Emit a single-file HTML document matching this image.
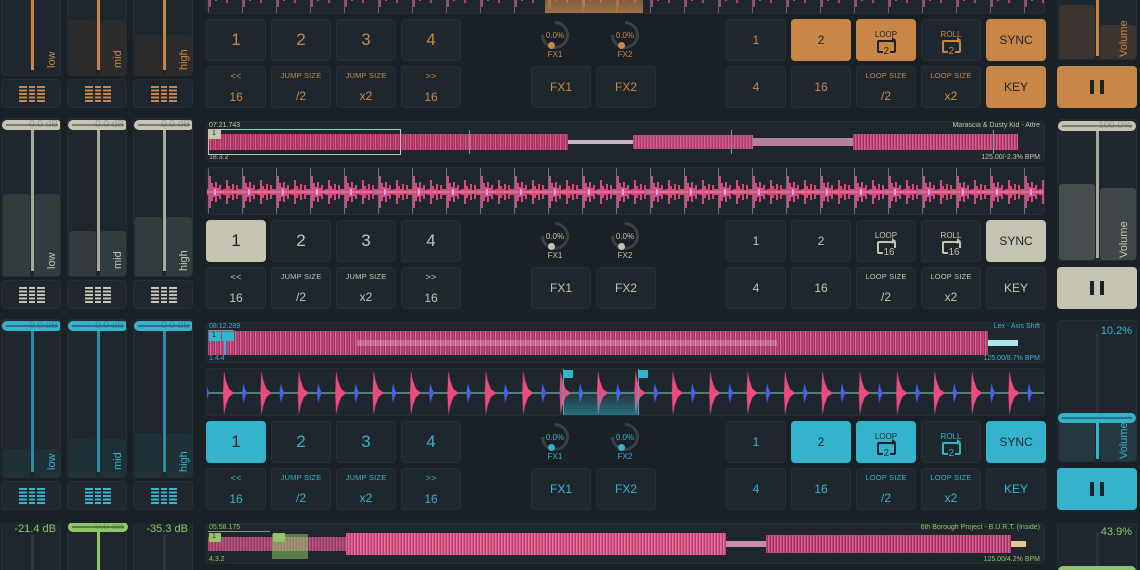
<!DOCTYPE html>
<html><head><meta charset="utf-8"><style>
*{margin:0;padding:0;box-sizing:border-box}
html,body{width:1140px;height:570px;overflow:hidden}
body{background:#1a2126;font-family:"Liberation Sans",sans-serif}
#w{position:relative;width:1140px;height:570px;overflow:hidden}
.deck{position:absolute;left:0;width:1140px;height:201px}
.p{position:absolute;background:#1e272d;border:1px solid #242e34;border-radius:4px}
.btn{position:absolute;width:60px;height:42px;background:#1e272d;border:1px solid #252f35;border-radius:4px;color:var(--c);text-align:center;display:flex;flex-direction:column;justify-content:center;align-items:center}
.btn.on{background:var(--c);color:#1c2328;border-color:var(--c)}
.big{font-size:17px}
.med{font-size:12px}
.sm{font-size:7.5px;letter-spacing:.2px;margin-bottom:9px}
.r1{top:99px}.r2{top:146px}
.d1{--c:#c98747;--line:#c98747;--bar:#2b2c2b}
.d2{--c:#c5c4b2;--line:#a9a99b;--bar:#323b3e}
.d3{--c:#35b3cc;--line:#2a8ea3;--bar:#1f3036}
.d4{--c:#92c46a;--line:#2e3a33;--bar:#222c30}
.eqp{position:absolute;top:-3px;width:60px;height:159px;overflow:hidden}
.bar{position:absolute;background:var(--bar);border-radius:3px 3px 0 0}
.vline{position:absolute;width:3px;background:var(--line)}
.cap{position:absolute;height:10px;background:var(--c);border-radius:5px;font-size:10px;color:rgba(30,38,44,.25);text-align:right;padding-right:4px;line-height:10px}
.cap:before{content:"";position:absolute;left:4px;right:4px;top:4px;height:2px;background:rgba(30,38,44,.45)}
.lbl{position:absolute;color:var(--c);font-size:11px;transform:rotate(-90deg);transform-origin:left top}
.eqb{position:absolute;top:159px;width:60px;height:29px}
.ico{position:absolute;left:17px;top:6px;width:26px;height:17px;background:repeating-linear-gradient(180deg,var(--c) 0 2px,transparent 2px 3.5px)}
.ico i{position:absolute;top:0;bottom:0;width:2px;background:#1e272d}
.ov{position:absolute;left:206px;top:0;width:839px;height:41px;overflow:hidden}
.sc{position:absolute;left:206px;top:46px;width:839px;height:48px;overflow:hidden}
.t7{position:absolute;font-size:7px;color:var(--c)}
.band{position:absolute;height:22px;top:9px}
.knob{position:absolute;top:101px;width:28px;height:28px;border-radius:50%;border:3px solid #3a4146;border-left-color:transparent;transform:rotate(45deg)}
.kt{position:absolute;font-size:8px;color:var(--c);text-align:center;width:40px}
.dot{position:absolute;width:7px;height:7px;border-radius:50%;background:var(--c)}
.vol{position:absolute;left:1057px;top:-2px;width:80px;height:142px;overflow:hidden}
.play{position:absolute;left:1057px;top:146px;width:80px;height:42px;border-radius:4px;background:var(--c)}
.play:before,.play:after{content:"";position:absolute;top:14px;width:4px;height:14px;background:#1c2328}
.play:before{left:33px}.play:after{left:43px}
.loop{position:relative;width:19px;height:13px;border:2px solid currentColor;border-radius:2px;margin-top:1px;margin-bottom:-3px}
.loop:before{content:"";position:absolute;right:-5px;top:-5px;border:3px solid transparent;border-left:4px solid currentColor}
.loop b{position:absolute;left:4px;top:5px;font-size:10px;font-weight:normal;line-height:10px;background:inherit;padding:0 1px}
.bl{font-size:8px;line-height:8px}
</style></head><body><div id="w">

<svg width="0" height="0" style="position:absolute">
<defs>
<pattern id="wp" width="34" height="48" patternUnits="userSpaceOnUse" x="1">
<rect x="0" y="0" width="1" height="48" fill="#6b7378"/>
<g fill="#ea4c86" opacity=".9">
<rect x="1" y="8" width="2" height="32"/><rect x="3" y="15" width="2" height="18"/><rect x="5" y="19" width="2" height="10"/><rect x="7" y="14" width="2" height="20"/><rect x="9" y="20" width="2" height="8"/><rect x="11" y="17" width="2" height="14"/><rect x="13" y="22" width="2" height="4"/><rect x="15" y="21" width="3" height="6"/><rect x="18" y="12" width="2" height="24"/><rect x="20" y="18" width="2" height="12"/><rect x="22" y="21" width="2" height="6"/><rect x="24" y="16" width="2" height="16"/><rect x="26" y="22" width="2" height="4"/><rect x="28" y="17" width="2" height="14"/><rect x="30" y="21" width="4" height="6"/>
</g>
<rect x="0" y="23.5" width="34" height="1" fill="#f28ab0"/>
<rect x="6" y="21" width="2" height="6" fill="#c9a6ff"/>
</pattern>
<pattern id="wc" width="37.4" height="48" patternUnits="userSpaceOnUse" x="16">
<rect x="0" y="23.5" width="37.4" height="1" fill="#8fd3c0"/>
<path d="M0 24 L1 2 L3 12 L6 20 L10 23 L10 25 L6 28 L3 36 L1 46 Z" fill="#ec4a80"/>
<path d="M19 24 L20.5 14 L22 20 L24 24 L22 28 L20.5 34 Z" fill="#4b5ef0"/>
</pattern>
</defs>
</svg>

<!-- ========== DECK 1 ========== -->
<div class="deck d1" style="top:-80px">
  <div class="p sc" style="border-color:#252f35">
    <svg width="839" height="48" style="position:absolute;left:0;top:0"><rect width="839" height="48" fill="url(#wp)" opacity=".8"/></svg>
    <div style="position:absolute;left:338px;top:0;width:98px;height:48px;background:linear-gradient(180deg,rgba(201,135,71,.15),rgba(201,135,71,.75));border-bottom:2px solid #c98747"></div>
  </div>
  <div class="p eqp" style="left:1px"><div class="vline" style="left:29px;top:0;height:152px"></div><div class="lbl" style="left:44px;top:150px">low</div></div>
  <div class="p eqp" style="left:67px"><div class="bar" style="left:1px;width:27px;top:102px;bottom:0"></div><div class="bar" style="left:32px;width:26px;top:102px;bottom:0"></div><div class="vline" style="left:29px;top:0;height:152px"></div><div class="lbl" style="left:44px;top:150px">mid</div></div>
  <div class="p eqp" style="left:133px"><div class="bar" style="left:1px;width:27px;top:117px;bottom:0"></div><div class="bar" style="left:32px;width:26px;top:117px;bottom:0"></div><div class="vline" style="left:29px;top:0;height:152px"></div><div class="lbl" style="left:44px;top:152px">high</div></div>
  <div class="p eqb" style="left:1px"><div class="ico"><i style="left:8px"></i><i style="left:16px"></i></div></div>
  <div class="p eqb" style="left:67px"><div class="ico"><i style="left:8px"></i><i style="left:16px"></i></div></div>
  <div class="p eqb" style="left:133px"><div class="ico"><i style="left:8px"></i><i style="left:16px"></i></div></div>
  <div class="p vol"><div class="bar" style="background:#3b342f;left:1px;width:36px;top:86px;bottom:0;border-radius:3px"></div><div class="bar" style="background:#3b342f;left:42px;width:36px;top:106px;bottom:0;border-radius:3px"></div><div class="vline" style="left:38px;top:0;height:137px"></div><div class="lbl" style="left:60px;top:138px">Volume</div></div>
  <div class="play"></div>
  <div class="btn r1 big" style="left:206px">1</div><div class="btn r1 big" style="left:271px">2</div><div class="btn r1 big" style="left:336px">3</div><div class="btn r1 big" style="left:401px">4</div>
  <div class="btn r2" style="left:206px"><div class="sm" style="font-size:9px">&lt;&lt;</div><div class="med">16</div></div>
  <div class="btn r2" style="left:271px"><div class="sm">JUMP SIZE</div><div class="med">/2</div></div>
  <div class="btn r2" style="left:336px"><div class="sm">JUMP SIZE</div><div class="med">x2</div></div>
  <div class="btn r2" style="left:401px"><div class="sm" style="font-size:9px">&gt;&gt;</div><div class="med">16</div></div>
  <div class="knob" style="left:541px"></div><div class="dot" style="left:548px;top:122px"></div><div class="kt" style="left:535px;top:111px">0.0%</div><div class="kt" style="left:535px;top:130px">FX1</div>
  <div class="knob" style="left:611px"></div><div class="dot" style="left:618px;top:122px"></div><div class="kt" style="left:605px;top:111px">0.0%</div><div class="kt" style="left:605px;top:130px">FX2</div>
  <div class="btn r2 med" style="left:531px">FX1</div><div class="btn r2 med" style="left:596px">FX2</div>
  <div class="btn r1 med" style="left:726px">1</div><div class="btn r1 on med" style="left:791px">2</div>
  <div class="btn r1 on" style="left:856px"><div class="bl">LOOP</div><div class="loop" style="background:var(--c)"><b>2</b></div></div>
  <div class="btn r1" style="left:921px"><div class="bl">ROLL</div><div class="loop" style="background:#1e272d"><b>2</b></div></div>
  <div class="btn r1 on med" style="left:986px">SYNC</div>
  <div class="btn r2 med" style="left:726px">4</div><div class="btn r2 med" style="left:791px">16</div>
  <div class="btn r2" style="left:856px"><div class="sm">LOOP SIZE</div><div class="med">/2</div></div>
  <div class="btn r2" style="left:921px"><div class="sm">LOOP SIZE</div><div class="med">x2</div></div>
  <div class="btn r2 on med" style="left:986px">KEY</div>
</div>

<!-- ========== DECK 2 ========== -->
<div class="deck d2" style="top:121px">
  <div class="p ov">
    <div class="t7" style="left:2px;top:0">07:21.743</div>
    <div class="t7" style="right:4px;top:0">Marascia &amp; Dusty Kid - Attre</div>
    <div class="t7" style="left:2px;top:32px">18.3.2</div>
    <div class="t7" style="right:4px;top:32px">125.00/-2.3% BPM</div>
    <div class="band" style="left:1px;width:360px;background:repeating-linear-gradient(90deg,#e94a84 0 1px,#a9386a 1px 2px,#f26b9c 2px 3px,#c9386c 3px 5px);opacity:.85;top:12px;height:16px"></div>
    <div class="band" style="left:361px;width:65px;top:18px;height:4px;background:#c9b3c8"></div>
    <div class="band" style="left:426px;width:120px;top:13px;height:14px;background:repeating-linear-gradient(90deg,#e94a84 0 1px,#b1477a 1px 2px,#f06a9c 2px 3px);opacity:.85"></div>
    <div class="band" style="left:546px;width:100px;top:16px;height:8px;background:#d89ab8;opacity:.8"></div>
    <div class="band" style="left:646px;width:165px;top:12px;height:16px;background:repeating-linear-gradient(90deg,#e94a84 0 1px,#a9386a 1px 2px,#f26b9c 2px 3px);opacity:.85"></div>
    <div style="position:absolute;left:1px;top:7px;width:193px;height:26px;border:1px solid #c5c4b2"></div>
    <div style="position:absolute;left:2px;top:8px;width:12px;height:9px;background:#c5c4b2;font-size:7px;color:#1c2328;padding-left:3px">1</div>
    <div style="position:absolute;left:262px;top:8px;width:1px;height:24px;background:#8a9094"></div>
    <div style="position:absolute;left:524px;top:8px;width:1px;height:24px;background:#8a9094"></div>
    <div style="position:absolute;left:786px;top:8px;width:1px;height:24px;background:#8a9094"></div>
  </div>
  <div class="p sc"><svg width="839" height="48" style="position:absolute;left:0;top:0"><rect width="839" height="48" fill="url(#wp)"/></svg></div>
  <div class="p eqp" style="left:1px"><div class="bar" style="left:1px;width:27px;top:75px;bottom:0"></div><div class="bar" style="left:32px;width:26px;top:75px;bottom:0"></div><div class="vline" style="left:29px;top:8px;height:144px"></div><div class="cap" style="left:0;top:1px;width:60px">0.0 dB</div><div class="lbl" style="left:44px;top:150px">low</div></div>
  <div class="p eqp" style="left:67px"><div class="bar" style="left:1px;width:27px;top:112px;bottom:0"></div><div class="bar" style="left:32px;width:26px;top:112px;bottom:0"></div><div class="vline" style="left:29px;top:8px;height:144px"></div><div class="cap" style="left:0;top:1px;width:60px">0.0 dB</div><div class="lbl" style="left:44px;top:150px">mid</div></div>
  <div class="p eqp" style="left:133px"><div class="bar" style="left:1px;width:27px;top:98px;bottom:0"></div><div class="bar" style="left:32px;width:26px;top:98px;bottom:0"></div><div class="vline" style="left:29px;top:8px;height:144px"></div><div class="cap" style="left:0;top:1px;width:60px">0.0 dB</div><div class="lbl" style="left:44px;top:152px">high</div></div>
  <div class="p eqb" style="left:1px"><div class="ico"><i style="left:8px"></i><i style="left:16px"></i></div></div>
  <div class="p eqb" style="left:67px"><div class="ico"><i style="left:8px"></i><i style="left:16px"></i></div></div>
  <div class="p eqb" style="left:133px"><div class="ico"><i style="left:8px"></i><i style="left:16px"></i></div></div>
  <div class="p vol"><div class="bar" style="background:#454d4e;left:1px;width:36px;top:64px;bottom:0;border-radius:3px"></div><div class="bar" style="background:#3f4748;left:42px;width:36px;top:68px;bottom:0;border-radius:3px"></div><div class="vline" style="left:38px;top:8px;height:130px"></div><div class="cap" style="left:0;top:1px;width:78px">100.0%</div><div class="lbl" style="left:60px;top:138px">Volume</div></div>
  <div class="play"></div>
  <div class="btn r1 big on" style="left:206px">1</div><div class="btn r1 big" style="left:271px">2</div><div class="btn r1 big" style="left:336px">3</div><div class="btn r1 big" style="left:401px">4</div>
  <div class="btn r2" style="left:206px"><div class="sm" style="font-size:9px">&lt;&lt;</div><div class="med">16</div></div>
  <div class="btn r2" style="left:271px"><div class="sm">JUMP SIZE</div><div class="med">/2</div></div>
  <div class="btn r2" style="left:336px"><div class="sm">JUMP SIZE</div><div class="med">x2</div></div>
  <div class="btn r2" style="left:401px"><div class="sm" style="font-size:9px">&gt;&gt;</div><div class="med">16</div></div>
  <div class="knob" style="left:541px"></div><div class="dot" style="left:548px;top:122px"></div><div class="kt" style="left:535px;top:111px">0.0%</div><div class="kt" style="left:535px;top:130px">FX1</div>
  <div class="knob" style="left:611px"></div><div class="dot" style="left:618px;top:122px"></div><div class="kt" style="left:605px;top:111px">0.0%</div><div class="kt" style="left:605px;top:130px">FX2</div>
  <div class="btn r2 med" style="left:531px">FX1</div><div class="btn r2 med" style="left:596px">FX2</div>
  <div class="btn r1 med" style="left:726px">1</div><div class="btn r1 med" style="left:791px">2</div>
  <div class="btn r1" style="left:856px"><div class="bl">LOOP</div><div class="loop" style="background:#1e272d"><b>16</b></div></div>
  <div class="btn r1" style="left:921px"><div class="bl">ROLL</div><div class="loop" style="background:#1e272d"><b>16</b></div></div>
  <div class="btn r1 on med" style="left:986px">SYNC</div>
  <div class="btn r2 med" style="left:726px">4</div><div class="btn r2 med" style="left:791px">16</div>
  <div class="btn r2" style="left:856px"><div class="sm">LOOP SIZE</div><div class="med">/2</div></div>
  <div class="btn r2" style="left:921px"><div class="sm">LOOP SIZE</div><div class="med">x2</div></div>
  <div class="btn r2 med" style="left:986px">KEY</div>
</div>

<!-- ========== DECK 3 ========== -->
<div class="deck d3" style="top:322px">
  <div class="p ov">
    <div class="t7" style="left:2px;top:0">08:12.289</div>
    <div class="t7" style="right:4px;top:0">Lex - Axis Shift</div>
    <div class="t7" style="left:2px;top:32px">1.4.4</div>
    <div class="t7" style="right:4px;top:32px">125.00/8.7% BPM</div>
    <div class="band" style="left:1px;width:780px;top:8px;height:24px;background:repeating-linear-gradient(90deg,#e94a84 0 1px,#a93468 1px 2px,#f27aa6 2px 3px,#c8437a 3px 5px);opacity:.85"></div>
    <div class="band" style="left:150px;width:420px;top:17px;height:6px;background:rgba(240,190,220,.35)"></div>
    <div class="band" style="left:781px;width:30px;top:17px;height:6px;background:#a9e6ee"></div>
    <div style="position:absolute;left:1px;top:7px;width:26px;height:1px;background:#8a9094"></div>
    <div style="position:absolute;left:2px;top:9px;width:12px;height:9px;background:#35b3cc;font-size:7px;color:#1c2328;padding-left:3px">1</div>
    <div style="position:absolute;left:15px;top:9px;width:12px;height:9px;background:#35b3cc"></div>
    <div style="position:absolute;left:17px;top:18px;width:2px;height:14px;background:#35b3cc"></div>
  </div>
  <div class="p sc">
    <svg width="839" height="48" style="position:absolute;left:0;top:0"><rect width="839" height="48" fill="url(#wc)"/></svg>
    <div style="position:absolute;left:356px;top:0;width:76px;height:48px;background:linear-gradient(180deg,transparent 40%,rgba(53,179,204,.55));border-left:1px solid #35b3cc;border-right:1px solid #35b3cc"></div>
    <div style="position:absolute;left:356px;top:1px;width:10px;height:8px;background:#35b3cc"></div>
    <div style="position:absolute;left:431px;top:1px;width:10px;height:8px;background:#35b3cc"></div>
  </div>
  <div class="p eqp" style="left:1px"><div class="bar" style="left:1px;width:27px;top:129px;bottom:0"></div><div class="bar" style="left:32px;width:26px;top:129px;bottom:0"></div><div class="vline" style="left:29px;top:8px;height:144px"></div><div class="cap" style="left:0;top:1px;width:60px">0.0 dB</div><div class="lbl" style="left:44px;top:150px">low</div></div>
  <div class="p eqp" style="left:67px"><div class="bar" style="left:1px;width:27px;top:119px;bottom:0"></div><div class="bar" style="left:32px;width:26px;top:119px;bottom:0"></div><div class="vline" style="left:29px;top:8px;height:144px"></div><div class="cap" style="left:0;top:1px;width:60px">0.0 dB</div><div class="lbl" style="left:44px;top:150px">mid</div></div>
  <div class="p eqp" style="left:133px"><div class="bar" style="left:1px;width:27px;top:113px;bottom:0"></div><div class="bar" style="left:32px;width:26px;top:113px;bottom:0"></div><div class="vline" style="left:29px;top:8px;height:144px"></div><div class="cap" style="left:0;top:1px;width:60px">0.0 dB</div><div class="lbl" style="left:44px;top:152px">high</div></div>
  <div class="p eqb" style="left:1px"><div class="ico"><i style="left:8px"></i><i style="left:16px"></i></div></div>
  <div class="p eqb" style="left:67px"><div class="ico"><i style="left:8px"></i><i style="left:16px"></i></div></div>
  <div class="p eqb" style="left:133px"><div class="ico"><i style="left:8px"></i><i style="left:16px"></i></div></div>
  <div class="p vol"><div class="vline" style="left:38px;top:12px;height:90px;background:#2a3338"></div><div class="bar" style="background:#24383f;left:1px;width:36px;top:100px;bottom:0;border-radius:3px"></div><div class="bar" style="background:#24383f;left:42px;width:36px;top:100px;bottom:0;border-radius:3px"></div><div class="vline" style="left:38px;top:95px;height:43px;background:#35b3cc"></div><div class="cap" style="left:0;top:92px;width:78px;color:transparent"></div><div style="position:absolute;right:4px;top:4px;font-size:11px;color:#35b3cc">10.2%</div><div class="lbl" style="left:60px;top:138px">Volume</div></div>
  <div class="play"></div>
  <div class="btn r1 big on" style="left:206px">1</div><div class="btn r1 big" style="left:271px">2</div><div class="btn r1 big" style="left:336px">3</div><div class="btn r1 big" style="left:401px">4</div>
  <div class="btn r2" style="left:206px"><div class="sm" style="font-size:9px">&lt;&lt;</div><div class="med">16</div></div>
  <div class="btn r2" style="left:271px"><div class="sm">JUMP SIZE</div><div class="med">/2</div></div>
  <div class="btn r2" style="left:336px"><div class="sm">JUMP SIZE</div><div class="med">x2</div></div>
  <div class="btn r2" style="left:401px"><div class="sm" style="font-size:9px">&gt;&gt;</div><div class="med">16</div></div>
  <div class="knob" style="left:541px"></div><div class="dot" style="left:548px;top:122px"></div><div class="kt" style="left:535px;top:111px">0.0%</div><div class="kt" style="left:535px;top:130px">FX1</div>
  <div class="knob" style="left:611px"></div><div class="dot" style="left:618px;top:122px"></div><div class="kt" style="left:605px;top:111px">0.0%</div><div class="kt" style="left:605px;top:130px">FX2</div>
  <div class="btn r2 med" style="left:531px">FX1</div><div class="btn r2 med" style="left:596px">FX2</div>
  <div class="btn r1 med" style="left:726px">1</div><div class="btn r1 on med" style="left:791px">2</div>
  <div class="btn r1 on" style="left:856px"><div class="bl">LOOP</div><div class="loop" style="background:var(--c)"><b>2</b></div></div>
  <div class="btn r1" style="left:921px"><div class="bl">ROLL</div><div class="loop" style="background:#1e272d"><b>2</b></div></div>
  <div class="btn r1 on med" style="left:986px">SYNC</div>
  <div class="btn r2 med" style="left:726px">4</div><div class="btn r2 med" style="left:791px">16</div>
  <div class="btn r2" style="left:856px"><div class="sm">LOOP SIZE</div><div class="med">/2</div></div>
  <div class="btn r2" style="left:921px"><div class="sm">LOOP SIZE</div><div class="med">x2</div></div>
  <div class="btn r2 med" style="left:986px">KEY</div>
</div>

<!-- ========== DECK 4 ========== -->
<div class="deck d4" style="top:523px;height:47px;overflow:hidden">
  <div class="p ov">
    <div class="t7" style="left:2px;top:0">05:58.175</div>
    <div class="t7" style="right:4px;top:0">6th Borough Project - B.U.R.T. (Inside)</div>
    <div class="t7" style="left:2px;top:32px">4.3.2</div>
    <div class="t7" style="right:4px;top:32px">125.00/4.2% BPM</div>
    <div class="band" style="left:1px;width:138px;top:13px;height:14px;background:repeating-linear-gradient(90deg,#e94a84 0 1px,#9c4a78 1px 2px,#f06a9c 2px 3px);opacity:.75"></div>
    <div class="band" style="left:139px;width:380px;top:9px;height:22px;background:repeating-linear-gradient(90deg,#ef5a92 0 1px,#c8437a 1px 2px,#f27aa6 2px 3px);opacity:.9"></div>
    <div class="band" style="left:519px;width:40px;top:17px;height:6px;background:#c88aa8"></div>
    <div class="band" style="left:559px;width:245px;top:11px;height:18px;background:repeating-linear-gradient(90deg,#e94a84 0 1px,#a9386a 1px 2px,#f26b9c 2px 3px);opacity:.85"></div>
    <div class="band" style="left:804px;width:15px;top:17px;height:6px;background:#e0c890"></div>
    <div style="position:absolute;left:65px;top:10px;width:36px;height:25px;background:rgba(146,196,106,.55)"></div>
    <div style="position:absolute;left:1px;top:7px;width:62px;height:1px;background:#8a9094"></div>
    <div style="position:absolute;left:2px;top:9px;width:12px;height:9px;background:#92c46a;font-size:7px;color:#1c2328;padding-left:3px">1</div>
    <div style="position:absolute;left:66px;top:9px;width:12px;height:9px;background:#92c46a"></div>
  </div>
  <div class="p" style="left:1px;top:-3px;width:60px;height:60px"><div class="vline" style="left:29px;top:14px;height:50px"></div><div style="position:absolute;right:4px;top:2px;font-size:11px;color:#92c46a">-21.4 dB</div></div>
  <div class="p" style="left:67px;top:-3px;width:60px;height:60px"><div class="vline" style="left:29px;top:8px;height:50px;background:#92c46a"></div><div class="cap" style="left:0;top:1px;width:60px">0.0 dB</div></div>
  <div class="p" style="left:133px;top:-3px;width:60px;height:60px"><div class="vline" style="left:29px;top:14px;height:50px"></div><div style="position:absolute;right:4px;top:2px;font-size:11px;color:#92c46a">-35.3 dB</div></div>
  <div class="p" style="left:1057px;top:-2px;width:80px;height:60px;overflow:hidden"><div class="vline" style="left:38px;top:10px;height:50px;background:#2a3338"></div><div style="position:absolute;right:4px;top:4px;font-size:11px;color:#92c46a">43.9%</div><div class="cap" style="left:0;top:44px;width:78px;height:12px"></div></div>
</div>

</div></body></html>
